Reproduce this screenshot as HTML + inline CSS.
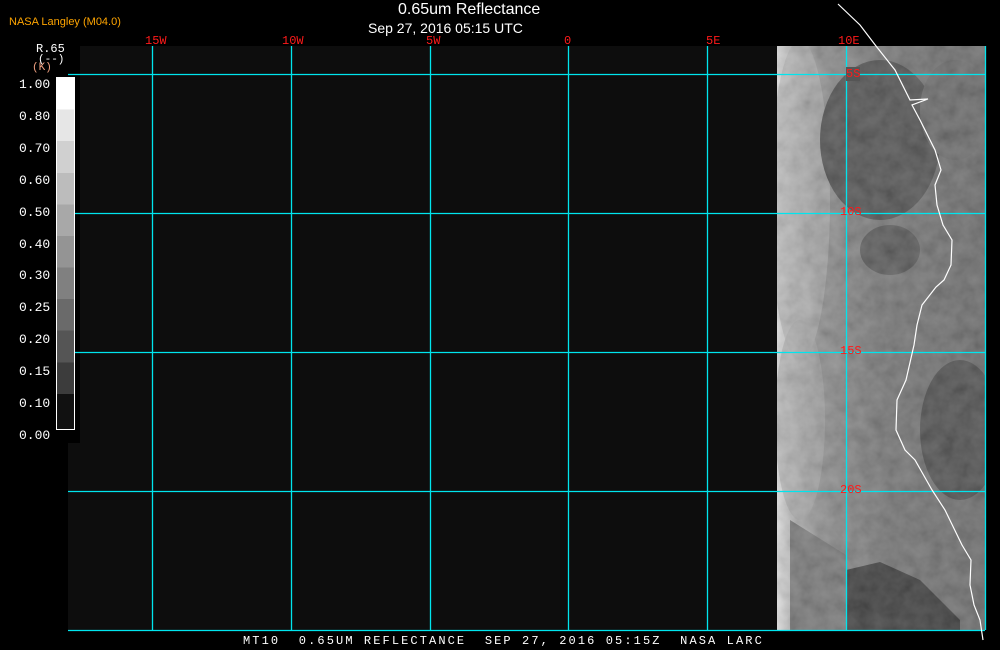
<!DOCTYPE html>
<html><head><meta charset="utf-8"><style>
html,body{margin:0;padding:0;background:#000;width:1000px;height:650px;overflow:hidden;position:relative}
.t{position:absolute;font-family:"Liberation Sans",sans-serif;color:#fff;white-space:nowrap}
.m{position:absolute;font-family:"Liberation Mono",monospace;white-space:pre;font-size:12px}
.red{color:#ff1a1a}
</style></head><body>
<div style="position:absolute;left:68px;top:46px;width:917px;height:584px;background:#0d0d0d"></div>
<div style="position:absolute;left:0;top:40px;width:80px;height:403px;background:#000"></div>
<svg style="position:absolute;left:0;top:0" width="1000" height="650">
<defs>
<filter id="n" filterUnits="userSpaceOnUse" x="777" y="46" width="208" height="584"><feTurbulence type="fractalNoise" baseFrequency="0.07" numOctaves="3" seed="4"/><feColorMatrix type="saturate" values="0"/><feComponentTransfer><feFuncA type="linear" slope="0" intercept="0.25"/></feComponentTransfer></filter>
<clipPath id="c"><rect x="777" y="46" width="208" height="584"/></clipPath>
<linearGradient id="g1" x1="0" x2="1"><stop offset="0" stop-color="#dcdcdc"/><stop offset="0.06" stop-color="#bbb"/><stop offset="0.2" stop-color="#888"/><stop offset="0.5" stop-color="#6c6c6c"/><stop offset="1" stop-color="#606060"/></linearGradient>
</defs>
<g clip-path="url(#c)">
<rect x="777" y="46" width="208" height="584" fill="url(#g1)"/>
<ellipse cx="800" cy="200" rx="30" ry="160" fill="#a8a8a8" opacity="0.6"/>
<ellipse cx="880" cy="140" rx="60" ry="80" fill="#454545"/>
<ellipse cx="955" cy="110" rx="35" ry="50" fill="#5e5e5e"/>
<ellipse cx="960" cy="430" rx="40" ry="70" fill="#424242"/>
<ellipse cx="890" cy="250" rx="30" ry="25" fill="#4c4c4c"/>
<ellipse cx="800" cy="420" rx="25" ry="100" fill="#a0a0a0" opacity="0.6"/>
<polygon points="846,570 880,562 920,580 960,620 960,630 846,630" fill="#2e2e2e"/>
<polygon points="790,520 846,555 846,630 790,630" fill="#6e6e6e"/>
<rect x="777" y="46" width="208" height="584" filter="url(#n)"/>
</g>
<g stroke="#00e5ee" stroke-width="1.3" fill="none">
<line x1="68" y1="74.5" x2="985" y2="74.5"/><line x1="68" y1="213.5" x2="985" y2="213.5"/>
<line x1="68" y1="352.5" x2="985" y2="352.5"/><line x1="68" y1="491.5" x2="985" y2="491.5"/>
<line x1="68" y1="630.5" x2="985" y2="630.5"/>
<line x1="152.5" y1="46" x2="152.5" y2="630"/><line x1="291.5" y1="46" x2="291.5" y2="630"/>
<line x1="430.5" y1="46" x2="430.5" y2="630"/><line x1="568.5" y1="46" x2="568.5" y2="630"/>
<line x1="707.5" y1="46" x2="707.5" y2="630"/><line x1="846.5" y1="46" x2="846.5" y2="630"/>
<line x1="985.5" y1="46" x2="985.5" y2="630"/>
</g>
<polyline fill="none" stroke="#fff" stroke-width="1.2" points="838,4 860,25 876,46 895,70 905,90 910,100 928,99 912,105 920,120 935,150 941,170 935,185 937,205 943,225 952,240 951,265 944,280 936,287 922,305 917,325 914,345 906,380 897,400 896,430 905,450 915,460 932,490 945,510 962,545 971,560 970,585 974,605 980,620 983,640"/>
</svg>
<div class="t" style="left:398px;top:1px;font-size:16px">0.65um Reflectance</div>
<div class="t" style="left:368px;top:20px;font-size:14px">Sep 27, 2016 05:15 UTC</div>
<div class="t" style="left:9px;top:16px;font-size:11px;color:#ffa500">NASA Langley (M04.0)</div>
<div class="m red" style="left:145px;top:34px">15W</div>
<div class="m red" style="left:282px;top:34px">10W</div>
<div class="m red" style="left:426px;top:34px">5W</div>
<div class="m red" style="left:564px;top:34px">0</div>
<div class="m red" style="left:706px;top:34px">5E</div>
<div class="m red" style="left:838px;top:34px">10E</div>
<div class="m red" style="left:846px;top:67px;background:#555">5S</div>
<div class="m red" style="left:840px;top:205px">10S</div>
<div class="m red" style="left:840px;top:344px">15S</div>
<div class="m red" style="left:840px;top:483px">20S</div>
<div class="m" style="left:36px;top:42px;color:#fff">R.65</div>
<div class="m" style="left:38px;top:54px;color:#fff;font-size:11px">(--)</div>
<div class="m" style="left:32px;top:62px;color:#f0a080;font-size:11px">(K)</div>
<div style="position:absolute;left:56px;top:77px;width:17px;height:351px;border:1px solid #fff;background:linear-gradient(#fff 0 9%,#e6e6e6 9% 18%,#d0d0d0 18% 27%,#bcbcbc 27% 36%,#a8a8a8 36% 45%,#949494 45% 54%,#808080 54% 63%,#6a6a6a 63% 72%,#555 72% 81%,#3c3c3c 81% 90%,#111 90%)"></div>
<div class="m" style="left:19px;top:69px;color:#fff;font-size:13px;line-height:31.9px">1.00<br>0.80<br>0.70<br>0.60<br>0.50<br>0.40<br>0.30<br>0.25<br>0.20<br>0.15<br>0.10<br>0.00</div>
<div class="m" style="left:243px;top:634px;color:#fff;font-size:12px;letter-spacing:2.1px">MT10  0.65UM REFLECTANCE  SEP 27, 2016 05:15Z  NASA LARC</div>
</body></html>
